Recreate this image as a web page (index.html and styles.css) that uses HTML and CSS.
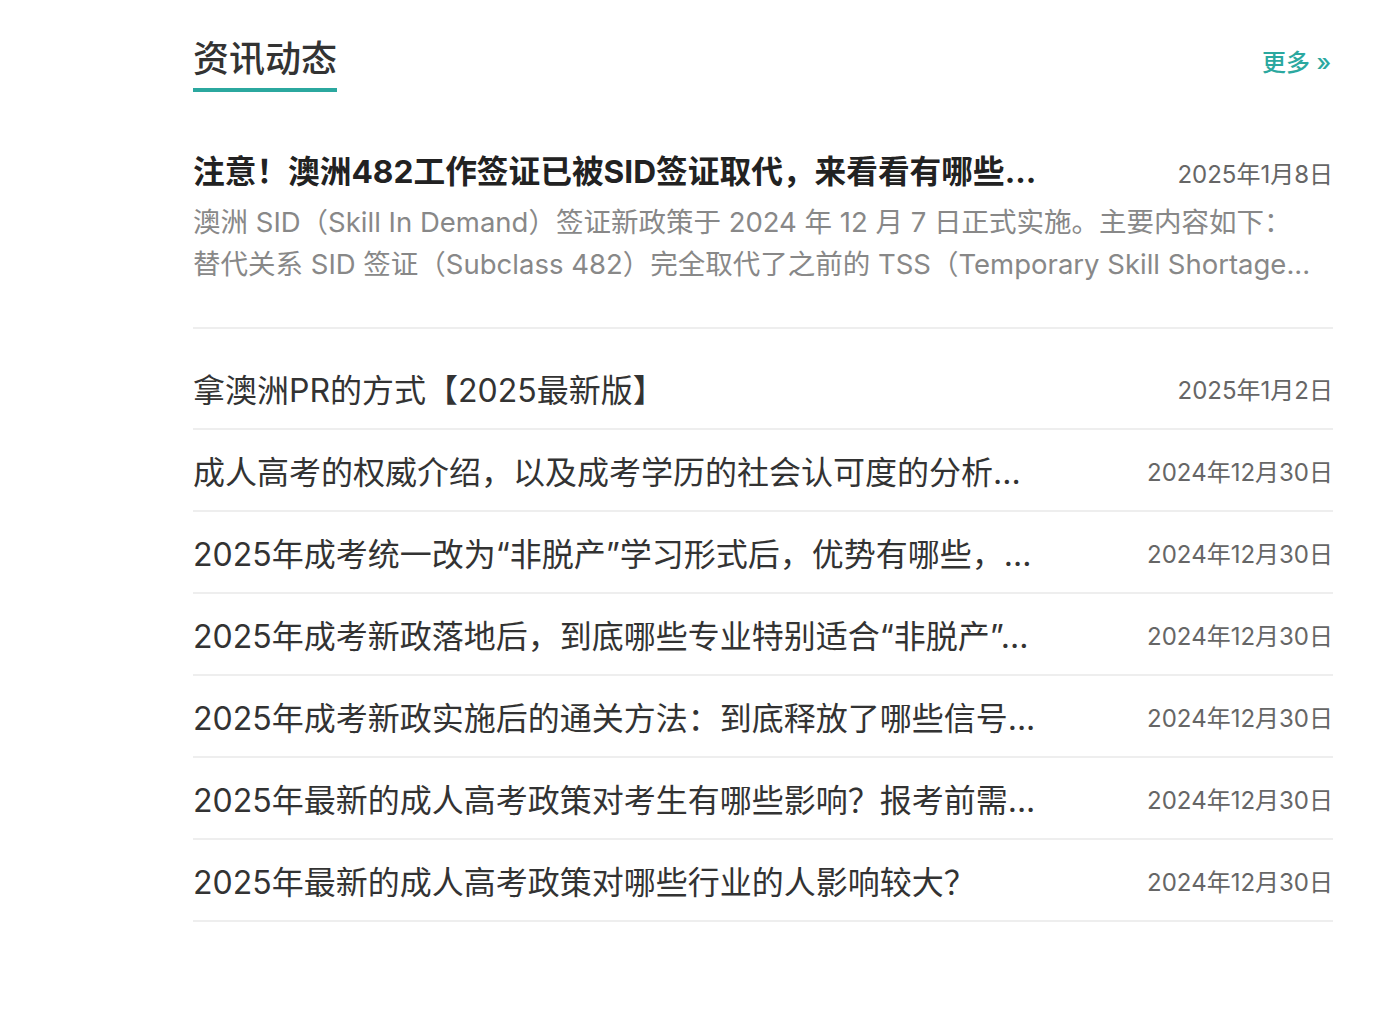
FILE: index.html
```html
<!DOCTYPE html>
<html lang="zh-CN">
<head>
    <meta charset="UTF-8">
    <meta name="viewport" content="width=device-width, initial-scale=1.0">
    <title>资讯动态</title>
    <link rel="stylesheet" href="styles.css">
</head>
<body>
    <section class="news">
        <div class="news-head">
            <h2 class="news-title">资讯动态</h2>
            <a class="more" href="#">更多 &raquo;</a>
        </div>

        <div class="top-item">
            <div class="row">
                <h3 class="top-title">注意！澳洲482工作签证已被SID签证取代，来看看有哪些...</h3>
                <span class="date">2025年1月8日</span>
            </div>
            <p class="summary">澳洲 SID（Skill In Demand）签证新政策于 2024 年 12 月 7 日正式实施。主要内容如下：<br>替代关系 SID 签证（Subclass 482）完全取代了之前的 TSS（Temporary Skill Shortage...</p>
        </div>

        <ul class="list">
            <li class="row item"><a href="#">拿澳洲PR的方式【2025最新版】</a><span class="date">2025年1月2日</span></li>
            <li class="row item"><a href="#">成人高考的权威介绍，以及成考学历的社会认可度的分析...</a><span class="date">2024年12月30日</span></li>
            <li class="row item"><a href="#">2025年成考统一改为“非脱产”学习形式后，优势有哪些，...</a><span class="date">2024年12月30日</span></li>
            <li class="row item"><a href="#">2025年成考新政落地后，到底哪些专业特别适合“非脱产”...</a><span class="date">2024年12月30日</span></li>
            <li class="row item"><a href="#">2025年成考新政实施后的通关方法：到底释放了哪些信号...</a><span class="date">2024年12月30日</span></li>
            <li class="row item"><a href="#">2025年最新的成人高考政策对考生有哪些影响？报考前需...</a><span class="date">2024年12月30日</span></li>
            <li class="row item"><a href="#">2025年最新的成人高考政策对哪些行业的人影响较大？</a><span class="date">2024年12月30日</span></li>
        </ul>
    </section>
</body>
</html>
```

FILE: styles.css
```css
body{
    margin: 0;
    background-color: #ffffff;
    color: #333333;
    font-family: Inter, "Noto Sans CJK SC", sans-serif;
}
a{
    color: inherit;
    text-decoration: none;
}
.news{
    width: 1140px;
    margin-left: 193px;
    padding-top: 34px;
}
.news-head{
    display: flex;
    justify-content: space-between;
    align-items: flex-start;
}
.news-title{
    margin: 0;
    font-size: 36px;
    font-weight: 500;
    line-height: 50px;
    color: #333333;
    padding-bottom: 4px;
    border-bottom: 4px solid #2ba89f;
}
.more{
    margin-top: 9px;
    margin-right: 2px;
    font-size: 24px;
    font-weight: 500;
    color: #2ba89f;
}
.top-item{
    margin-top: 60px;
    padding-bottom: 42px;
    border-bottom: 2px solid #eeeeee;
}
.row{
    display: flex;
    justify-content: space-between;
    align-items: center;
}
.top-title{
    margin: 0;
    font-size: 31.7px;
    font-weight: 700;
    line-height: 40px;
    color: #222222;
}
.date{
    font-size: 24px;
    color: #666666;
    white-space: nowrap;
}
.summary{
    margin: 9px 0 0;
    font-size: 27.5px;
    line-height: 42px;
    color: #888888;
    white-space: nowrap;
    overflow: hidden;
}
.list{
    list-style: none;
    margin: 19px 0 0;
    padding: 0;
}
.item{
    height: 80px;
    border-bottom: 2px solid #eeeeee;
    font-size: 32px;
    color: #333333;
}
```
